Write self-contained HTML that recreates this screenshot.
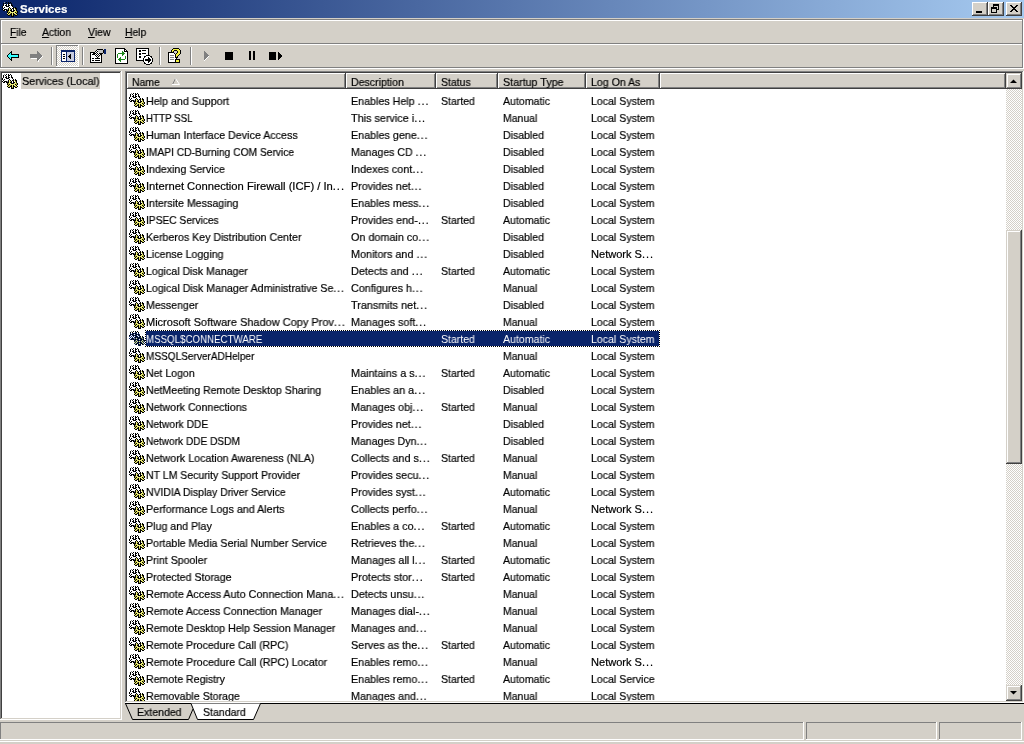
<!DOCTYPE html><html><head><meta charset="utf-8"><style>
*{margin:0;padding:0;box-sizing:border-box}
html,body{width:1024px;height:744px;overflow:hidden;background:#d4d0c8}
body{position:relative;font-family:"Liberation Sans",sans-serif;font-size:11px;color:#000}
.a{position:absolute}
.t{position:absolute;white-space:nowrap;line-height:13px;font-size:11px;will-change:transform;-webkit-text-stroke:0.2px currentColor}
.g{position:absolute}
.hl{position:absolute;height:1px}
.vl{position:absolute;width:1px}
.chk{background-color:#fff;background-image:linear-gradient(45deg,#d4d0c8 25%,transparent 25%,transparent 75%,#d4d0c8 75%),linear-gradient(45deg,#d4d0c8 25%,transparent 25%,transparent 75%,#d4d0c8 75%);background-size:2px 2px;background-position:0 0,1px 1px}
</style></head><body>

<style>.gr{position:absolute;left:-1px;top:-1px;width:1px;height:1px;box-shadow:3px 2px #909090,5px 2px #000,7px 2px #000,9px 2px #000,2px 3px #000,4px 3px #000,7px 3px #000,8px 3px #000,10px 3px #000,2px 4px #000,3px 4px #fff,4px 4px #fff,5px 4px #000,6px 4px #fff,7px 4px #000,8px 4px #fff,9px 4px #fff,10px 4px #000,2px 5px #000,3px 5px #fff,4px 5px #000,5px 5px #000,6px 5px #fff,7px 5px #000,8px 5px #000,9px 5px #fff,10px 5px #000,11px 5px #000,1px 6px #000,2px 6px #fff,3px 6px #fff,4px 6px #fff,5px 6px #000,6px 6px #000,7px 6px #000,8px 6px #fff,9px 6px #fff,10px 6px #fff,11px 6px #000,1px 7px #000,2px 7px #fff,3px 7px #000,4px 7px #fff,5px 7px #fff,6px 7px #fff,7px 7px #fff,8px 7px #000,9px 7px #fff,10px 7px #fff,11px 7px #fff,12px 7px #000,14px 7px #000,2px 8px #000,3px 8px #fff,4px 8px #fff,5px 8px #fff,6px 8px #fff,7px 8px #000,8px 8px #ecec78,9px 8px #000,10px 8px #fff,11px 8px #000,12px 8px #000,13px 8px #ecec78,14px 8px #000,15px 8px #000,1px 9px #000,2px 9px #fff,3px 9px #000,4px 9px #000,5px 9px #000,6px 9px #909090,7px 9px #000,8px 9px #ecec78,9px 9px #a8a838,10px 9px #000,11px 9px #fff,12px 9px #000,13px 9px #fff,14px 9px #a8a838,15px 9px #000,2px 10px #000,3px 10px #000,4px 10px #fff,5px 10px #000,6px 10px #000,7px 10px #000,8px 10px #ecec78,9px 10px #000,10px 10px #000,11px 10px #fff,12px 10px #000,13px 10px #000,14px 10px #ecec78,15px 10px #000,6px 11px #000,7px 11px #a8a838,8px 11px #ecec78,9px 11px #ecec78,10px 11px #000,11px 11px #000,12px 11px #000,13px 11px #ecec78,14px 11px #ecec78,15px 11px #a8a838,16px 11px #000,6px 12px #000,7px 12px #a8a838,8px 12px #000,9px 12px #ecec78,10px 12px #ecec78,11px 12px #ecec78,12px 12px #ecec78,13px 12px #ecec78,14px 12px #000,15px 12px #a8a838,16px 12px #000,6px 13px #ecec78,7px 13px #000,8px 13px #ecec78,9px 13px #a8a838,10px 13px #000,11px 13px #ecec78,12px 13px #000,13px 13px #ecec78,14px 13px #ecec78,15px 13px #000,6px 14px #000,7px 14px #ecec78,8px 14px #a8a838,9px 14px #000,10px 14px #000,11px 14px #ecec78,12px 14px #000,13px 14px #000,14px 14px #a8a838,15px 14px #ecec78,16px 14px #000,7px 15px #000,8px 15px #000,10px 15px #000,11px 15px #a8a838,12px 15px #000,14px 15px #000,15px 15px #000,10px 16px #000,11px 16px #000,12px 16px #000}</style>
<div class="a" style="left:0;top:0;width:1024px;height:18px;background:linear-gradient(to right,#0a246a,#a6caf0)"></div>
<div class="a" style="left:2px;top:1px"><div class="gr"></div></div>
<div class="t" style="left:20px;top:3px;color:#fff;font-weight:bold;transform:scaleX(1.045);transform-origin:0 0">Services</div>
<div class="a" style="left:972px;top:2px;width:16px;height:14px;background:#d4d0c8"></div><div class="a" style="left:972px;top:2px;width:16px;height:1px;background:#fff"></div><div class="a" style="left:972px;top:2px;width:1px;height:14px;background:#fff"></div><div class="a" style="left:973px;top:14px;width:14px;height:1px;background:#808080"></div><div class="a" style="left:986px;top:3px;width:1px;height:12px;background:#808080"></div><div class="a" style="left:972px;top:15px;width:16px;height:1px;background:#404040"></div><div class="a" style="left:987px;top:2px;width:1px;height:14px;background:#404040"></div>
<div class="a" style="left:976px;top:11px;width:6px;height:2px;background:#000"></div>
<div class="a" style="left:988px;top:2px;width:16px;height:14px;background:#d4d0c8"></div><div class="a" style="left:988px;top:2px;width:16px;height:1px;background:#fff"></div><div class="a" style="left:988px;top:2px;width:1px;height:14px;background:#fff"></div><div class="a" style="left:989px;top:14px;width:14px;height:1px;background:#808080"></div><div class="a" style="left:1002px;top:3px;width:1px;height:12px;background:#808080"></div><div class="a" style="left:988px;top:15px;width:16px;height:1px;background:#404040"></div><div class="a" style="left:1003px;top:2px;width:1px;height:14px;background:#404040"></div>
<svg class="a" style="left:991px;top:4px;" width="8" height="9" shape-rendering="crispEdges"><rect x="2" y="0" width="6" height="1" fill="#000"/><rect x="2" y="1" width="6" height="1" fill="#000"/><rect x="2" y="2" width="1" height="1" fill="#000"/><rect x="7" y="2" width="1" height="1" fill="#000"/><rect x="0" y="3" width="6" height="1" fill="#000"/><rect x="7" y="3" width="1" height="1" fill="#000"/><rect x="0" y="4" width="6" height="1" fill="#000"/><rect x="7" y="4" width="1" height="1" fill="#000"/><rect x="0" y="5" width="1" height="1" fill="#000"/><rect x="5" y="5" width="3" height="1" fill="#000"/><rect x="0" y="6" width="1" height="1" fill="#000"/><rect x="5" y="6" width="1" height="1" fill="#000"/><rect x="0" y="7" width="1" height="1" fill="#000"/><rect x="5" y="7" width="1" height="1" fill="#000"/><rect x="0" y="8" width="6" height="1" fill="#000"/></svg>
<div class="a" style="left:1006px;top:2px;width:16px;height:14px;background:#d4d0c8"></div><div class="a" style="left:1006px;top:2px;width:16px;height:1px;background:#fff"></div><div class="a" style="left:1006px;top:2px;width:1px;height:14px;background:#fff"></div><div class="a" style="left:1007px;top:14px;width:14px;height:1px;background:#808080"></div><div class="a" style="left:1020px;top:3px;width:1px;height:12px;background:#808080"></div><div class="a" style="left:1006px;top:15px;width:16px;height:1px;background:#404040"></div><div class="a" style="left:1021px;top:2px;width:1px;height:14px;background:#404040"></div>
<svg class="a" style="left:1010px;top:5px;" width="8" height="7" shape-rendering="crispEdges"><rect x="0" y="0" width="2" height="1" fill="#000"/><rect x="6" y="0" width="2" height="1" fill="#000"/><rect x="1" y="1" width="2" height="1" fill="#000"/><rect x="5" y="1" width="2" height="1" fill="#000"/><rect x="2" y="2" width="4" height="1" fill="#000"/><rect x="3" y="3" width="2" height="1" fill="#000"/><rect x="2" y="4" width="4" height="1" fill="#000"/><rect x="1" y="5" width="2" height="1" fill="#000"/><rect x="5" y="5" width="2" height="1" fill="#000"/><rect x="0" y="6" width="2" height="1" fill="#000"/><rect x="6" y="6" width="2" height="1" fill="#000"/></svg>
<div class="a" style="left:0px;top:18px;width:1024px;height:1px;background:#d4d0c8"></div>
<div class="a" style="left:0px;top:19px;width:1023px;height:1px;background:#808080"></div>
<div class="a" style="left:1px;top:20px;width:1021px;height:1px;background:#fff"></div>
<div class="a" style="left:0px;top:19px;width:1px;height:49px;background:#808080"></div>
<div class="a" style="left:1px;top:20px;width:1px;height:48px;background:#fff"></div>
<div class="a" style="left:1022px;top:19px;width:1px;height:49px;background:#808080"></div>
<div class="a" style="left:1023px;top:19px;width:1px;height:50px;background:#fff"></div>
<div class="a" style="left:1px;top:43px;width:1021px;height:1px;background:#808080"></div>
<div class="a" style="left:1px;top:44px;width:1021px;height:1px;background:#fff"></div>
<div class="a" style="left:0px;top:67px;width:1023px;height:1px;background:#808080"></div>
<div class="a" style="left:0px;top:68px;width:1024px;height:1px;background:#fff"></div>
<div class="t" style="left:10px;top:26px;transform:scaleX(0.9363);transform-origin:0 0;"><span style="text-decoration:underline">F</span>ile</div>
<div class="t" style="left:42px;top:26px;transform:scaleX(0.9508);transform-origin:0 0;"><span style="text-decoration:underline">A</span>ction</div>
<div class="t" style="left:88px;top:26px;transform:scaleX(0.9512);transform-origin:0 0;"><span style="text-decoration:underline">V</span>iew</div>
<div class="t" style="left:125px;top:26px;transform:scaleX(0.9390);transform-origin:0 0;"><span style="text-decoration:underline">H</span>elp</div>
<svg class="a" style="left:7px;top:51px;" width="12" height="10" shape-rendering="crispEdges"><rect x="4" y="0" width="1" height="1" fill="#000"/><rect x="3" y="1" width="2" height="1" fill="#000"/><rect x="2" y="2" width="1" height="1" fill="#000"/><rect x="3" y="2" width="1" height="1" fill="#33ffff"/><rect x="4" y="2" width="1" height="1" fill="#000"/><rect x="1" y="3" width="1" height="1" fill="#000"/><rect x="2" y="3" width="2" height="1" fill="#33ffff"/><rect x="4" y="3" width="8" height="1" fill="#000"/><rect x="0" y="4" width="1" height="1" fill="#000"/><rect x="1" y="4" width="10" height="1" fill="#33ffff"/><rect x="11" y="4" width="1" height="1" fill="#000"/><rect x="0" y="5" width="1" height="1" fill="#000"/><rect x="1" y="5" width="10" height="1" fill="#33ffff"/><rect x="11" y="5" width="1" height="1" fill="#000"/><rect x="1" y="6" width="1" height="1" fill="#000"/><rect x="2" y="6" width="2" height="1" fill="#33ffff"/><rect x="4" y="6" width="8" height="1" fill="#000"/><rect x="2" y="7" width="1" height="1" fill="#000"/><rect x="3" y="7" width="1" height="1" fill="#33ffff"/><rect x="4" y="7" width="1" height="1" fill="#000"/><rect x="3" y="8" width="2" height="1" fill="#000"/><rect x="4" y="9" width="1" height="1" fill="#000"/></svg><svg class="a" style="left:30px;top:51px;" width="13" height="11" shape-rendering="crispEdges"><rect x="7" y="0" width="1" height="1" fill="#808080"/><rect x="7" y="1" width="2" height="1" fill="#808080"/><rect x="7" y="2" width="3" height="1" fill="#808080"/><rect x="0" y="3" width="11" height="1" fill="#808080"/><rect x="0" y="4" width="12" height="1" fill="#808080"/><rect x="0" y="5" width="12" height="1" fill="#808080"/><rect x="12" y="5" width="1" height="1" fill="#fff"/><rect x="0" y="6" width="11" height="1" fill="#808080"/><rect x="11" y="6" width="1" height="1" fill="#fff"/><rect x="1" y="7" width="6" height="1" fill="#fff"/><rect x="7" y="7" width="3" height="1" fill="#808080"/><rect x="10" y="7" width="1" height="1" fill="#fff"/><rect x="7" y="8" width="2" height="1" fill="#808080"/><rect x="9" y="8" width="1" height="1" fill="#fff"/><rect x="7" y="9" width="1" height="1" fill="#808080"/><rect x="8" y="9" width="1" height="1" fill="#fff"/><rect x="8" y="10" width="1" height="1" fill="#fff"/></svg><div class="a" style="left:51px;top:47px;width:1px;height:18px;background:#808080"></div><div class="a" style="left:52px;top:47px;width:1px;height:18px;background:#fff"></div><div class="a chk" style="left:57px;top:46px;width:21px;height:20px"></div><div class="a" style="left:56px;top:45px;width:22px;height:1px;background:#808080"></div><div class="a" style="left:56px;top:45px;width:1px;height:21px;background:#808080"></div><div class="a" style="left:56px;top:66px;width:23px;height:1px;background:#fff"></div><div class="a" style="left:78px;top:45px;width:1px;height:22px;background:#fff"></div><svg class="a" style="left:61px;top:50px;" width="14" height="12" shape-rendering="crispEdges"><rect x="0" y="0" width="14" height="1" fill="#0a246a"/><rect x="0" y="1" width="14" height="1" fill="#0a246a"/><rect x="0" y="2" width="1" height="1" fill="#0a246a"/><rect x="1" y="2" width="4" height="1" fill="#fff"/><rect x="5" y="2" width="1" height="1" fill="#0a246a"/><rect x="6" y="2" width="7" height="1" fill="#c8cce0"/><rect x="13" y="2" width="1" height="1" fill="#0a246a"/><rect x="0" y="3" width="1" height="1" fill="#0a246a"/><rect x="1" y="3" width="4" height="1" fill="#fff"/><rect x="5" y="3" width="1" height="1" fill="#0a246a"/><rect x="6" y="3" width="7" height="1" fill="#c8cce0"/><rect x="13" y="3" width="1" height="1" fill="#0a246a"/><rect x="0" y="4" width="1" height="1" fill="#0a246a"/><rect x="1" y="4" width="1" height="1" fill="#fff"/><rect x="2" y="4" width="2" height="1" fill="#000"/><rect x="4" y="4" width="1" height="1" fill="#fff"/><rect x="5" y="4" width="1" height="1" fill="#0a246a"/><rect x="6" y="4" width="3" height="1" fill="#c8cce0"/><rect x="9" y="4" width="1" height="1" fill="#000"/><rect x="10" y="4" width="3" height="1" fill="#c8cce0"/><rect x="13" y="4" width="1" height="1" fill="#0a246a"/><rect x="0" y="5" width="1" height="1" fill="#0a246a"/><rect x="1" y="5" width="4" height="1" fill="#fff"/><rect x="5" y="5" width="1" height="1" fill="#0a246a"/><rect x="6" y="5" width="2" height="1" fill="#c8cce0"/><rect x="8" y="5" width="2" height="1" fill="#000"/><rect x="10" y="5" width="3" height="1" fill="#c8cce0"/><rect x="13" y="5" width="1" height="1" fill="#0a246a"/><rect x="0" y="6" width="1" height="1" fill="#0a246a"/><rect x="1" y="6" width="1" height="1" fill="#fff"/><rect x="2" y="6" width="2" height="1" fill="#000"/><rect x="4" y="6" width="1" height="1" fill="#fff"/><rect x="5" y="6" width="1" height="1" fill="#0a246a"/><rect x="6" y="6" width="1" height="1" fill="#c8cce0"/><rect x="7" y="6" width="3" height="1" fill="#000"/><rect x="10" y="6" width="3" height="1" fill="#c8cce0"/><rect x="13" y="6" width="1" height="1" fill="#0a246a"/><rect x="0" y="7" width="1" height="1" fill="#0a246a"/><rect x="1" y="7" width="4" height="1" fill="#fff"/><rect x="5" y="7" width="1" height="1" fill="#0a246a"/><rect x="6" y="7" width="2" height="1" fill="#c8cce0"/><rect x="8" y="7" width="2" height="1" fill="#000"/><rect x="10" y="7" width="3" height="1" fill="#c8cce0"/><rect x="13" y="7" width="1" height="1" fill="#0a246a"/><rect x="0" y="8" width="1" height="1" fill="#0a246a"/><rect x="1" y="8" width="1" height="1" fill="#fff"/><rect x="2" y="8" width="2" height="1" fill="#000"/><rect x="4" y="8" width="1" height="1" fill="#fff"/><rect x="5" y="8" width="1" height="1" fill="#0a246a"/><rect x="6" y="8" width="3" height="1" fill="#c8cce0"/><rect x="9" y="8" width="1" height="1" fill="#000"/><rect x="10" y="8" width="3" height="1" fill="#c8cce0"/><rect x="13" y="8" width="1" height="1" fill="#0a246a"/><rect x="0" y="9" width="1" height="1" fill="#0a246a"/><rect x="1" y="9" width="4" height="1" fill="#fff"/><rect x="5" y="9" width="1" height="1" fill="#0a246a"/><rect x="6" y="9" width="7" height="1" fill="#c8cce0"/><rect x="13" y="9" width="1" height="1" fill="#0a246a"/><rect x="0" y="10" width="1" height="1" fill="#0a246a"/><rect x="1" y="10" width="4" height="1" fill="#fff"/><rect x="5" y="10" width="1" height="1" fill="#0a246a"/><rect x="6" y="10" width="7" height="1" fill="#c8cce0"/><rect x="13" y="10" width="1" height="1" fill="#0a246a"/><rect x="0" y="11" width="14" height="1" fill="#0a246a"/></svg><div class="a" style="left:82px;top:47px;width:1px;height:18px;background:#808080"></div><div class="a" style="left:83px;top:47px;width:1px;height:18px;background:#fff"></div><svg class="a" style="left:90px;top:48px;" width="16" height="15" shape-rendering="crispEdges"><rect x="7" y="1" width="6" height="1" fill="#000"/><rect x="14" y="1" width="2" height="1" fill="#0a246a"/><rect x="6" y="2" width="1" height="1" fill="#000"/><rect x="7" y="2" width="1" height="1" fill="#fff"/><rect x="8" y="2" width="5" height="1" fill="#c0c0c0"/><rect x="13" y="2" width="1" height="1" fill="#000"/><rect x="14" y="2" width="2" height="1" fill="#0a246a"/><rect x="5" y="3" width="1" height="1" fill="#000"/><rect x="6" y="3" width="1" height="1" fill="#fff"/><rect x="7" y="3" width="1" height="1" fill="#000"/><rect x="8" y="3" width="5" height="1" fill="#c0c0c0"/><rect x="13" y="3" width="1" height="1" fill="#000"/><rect x="14" y="3" width="2" height="1" fill="#0a246a"/><rect x="0" y="4" width="5" height="1" fill="#000"/><rect x="5" y="4" width="1" height="1" fill="#fff"/><rect x="6" y="4" width="1" height="1" fill="#000"/><rect x="7" y="4" width="1" height="1" fill="#fff"/><rect x="9" y="4" width="4" height="1" fill="#c0c0c0"/><rect x="13" y="4" width="1" height="1" fill="#000"/><rect x="14" y="4" width="2" height="1" fill="#0a246a"/><rect x="0" y="5" width="1" height="1" fill="#000"/><rect x="1" y="5" width="2" height="1" fill="#fff"/><rect x="3" y="5" width="3" height="1" fill="#000"/><rect x="6" y="5" width="1" height="1" fill="#fff"/><rect x="7" y="5" width="1" height="1" fill="#000"/><rect x="8" y="5" width="1" height="1" fill="#fff"/><rect x="9" y="5" width="4" height="1" fill="#000"/><rect x="14" y="5" width="2" height="1" fill="#0a246a"/><rect x="0" y="6" width="1" height="1" fill="#000"/><rect x="1" y="6" width="1" height="1" fill="#fff"/><rect x="2" y="6" width="3" height="1" fill="#000"/><rect x="5" y="6" width="1" height="1" fill="#fff"/><rect x="6" y="6" width="1" height="1" fill="#000"/><rect x="7" y="6" width="1" height="1" fill="#fff"/><rect x="8" y="6" width="1" height="1" fill="#000"/><rect x="9" y="6" width="1" height="1" fill="#fff"/><rect x="10" y="6" width="2" height="1" fill="#000"/><rect x="0" y="7" width="1" height="1" fill="#000"/><rect x="1" y="7" width="4" height="1" fill="#fff"/><rect x="5" y="7" width="1" height="1" fill="#000"/><rect x="6" y="7" width="1" height="1" fill="#fff"/><rect x="7" y="7" width="1" height="1" fill="#000"/><rect x="8" y="7" width="1" height="1" fill="#fff"/><rect x="9" y="7" width="1" height="1" fill="#000"/><rect x="11" y="7" width="1" height="1" fill="#000"/><rect x="0" y="8" width="1" height="1" fill="#000"/><rect x="1" y="8" width="5" height="1" fill="#fff"/><rect x="6" y="8" width="1" height="1" fill="#000"/><rect x="7" y="8" width="1" height="1" fill="#fff"/><rect x="8" y="8" width="1" height="1" fill="#000"/><rect x="10" y="8" width="1" height="1" fill="#fff"/><rect x="11" y="8" width="1" height="1" fill="#000"/><rect x="0" y="9" width="1" height="1" fill="#000"/><rect x="1" y="9" width="6" height="1" fill="#fff"/><rect x="7" y="9" width="1" height="1" fill="#000"/><rect x="9" y="9" width="2" height="1" fill="#fff"/><rect x="11" y="9" width="1" height="1" fill="#000"/><rect x="0" y="10" width="1" height="1" fill="#000"/><rect x="1" y="10" width="1" height="1" fill="#fff"/><rect x="2" y="10" width="2" height="1" fill="#000"/><rect x="4" y="10" width="1" height="1" fill="#fff"/><rect x="5" y="10" width="5" height="1" fill="#000"/><rect x="10" y="10" width="1" height="1" fill="#fff"/><rect x="11" y="10" width="1" height="1" fill="#000"/><rect x="0" y="11" width="1" height="1" fill="#000"/><rect x="1" y="11" width="10" height="1" fill="#fff"/><rect x="11" y="11" width="1" height="1" fill="#000"/><rect x="0" y="12" width="1" height="1" fill="#000"/><rect x="1" y="12" width="1" height="1" fill="#fff"/><rect x="2" y="12" width="2" height="1" fill="#000"/><rect x="4" y="12" width="1" height="1" fill="#fff"/><rect x="5" y="12" width="5" height="1" fill="#000"/><rect x="10" y="12" width="1" height="1" fill="#fff"/><rect x="11" y="12" width="1" height="1" fill="#000"/><rect x="0" y="13" width="1" height="1" fill="#000"/><rect x="1" y="13" width="10" height="1" fill="#fff"/><rect x="11" y="13" width="1" height="1" fill="#000"/><rect x="0" y="14" width="12" height="1" fill="#000"/></svg><svg class="a" style="left:115px;top:48px;" width="13" height="16" shape-rendering="crispEdges"><rect x="0" y="0" width="10" height="1" fill="#000"/><rect x="0" y="1" width="1" height="1" fill="#000"/><rect x="1" y="1" width="8" height="1" fill="#fff"/><rect x="9" y="1" width="2" height="1" fill="#000"/><rect x="0" y="2" width="1" height="1" fill="#000"/><rect x="1" y="2" width="8" height="1" fill="#fff"/><rect x="9" y="2" width="1" height="1" fill="#000"/><rect x="10" y="2" width="1" height="1" fill="#fff"/><rect x="11" y="2" width="1" height="1" fill="#000"/><rect x="0" y="3" width="1" height="1" fill="#000"/><rect x="1" y="3" width="6" height="1" fill="#fff"/><rect x="7" y="3" width="1" height="1" fill="#1f8a1f"/><rect x="8" y="3" width="1" height="1" fill="#fff"/><rect x="9" y="3" width="4" height="1" fill="#000"/><rect x="0" y="4" width="1" height="1" fill="#000"/><rect x="1" y="4" width="6" height="1" fill="#fff"/><rect x="7" y="4" width="2" height="1" fill="#1f8a1f"/><rect x="9" y="4" width="3" height="1" fill="#fff"/><rect x="12" y="4" width="1" height="1" fill="#000"/><rect x="0" y="5" width="1" height="1" fill="#000"/><rect x="1" y="5" width="2" height="1" fill="#fff"/><rect x="3" y="5" width="7" height="1" fill="#1f8a1f"/><rect x="10" y="5" width="2" height="1" fill="#fff"/><rect x="12" y="5" width="1" height="1" fill="#000"/><rect x="0" y="6" width="1" height="1" fill="#000"/><rect x="1" y="6" width="1" height="1" fill="#fff"/><rect x="2" y="6" width="1" height="1" fill="#1f8a1f"/><rect x="3" y="6" width="4" height="1" fill="#fff"/><rect x="7" y="6" width="2" height="1" fill="#1f8a1f"/><rect x="9" y="6" width="3" height="1" fill="#fff"/><rect x="12" y="6" width="1" height="1" fill="#000"/><rect x="0" y="7" width="1" height="1" fill="#000"/><rect x="1" y="7" width="1" height="1" fill="#fff"/><rect x="2" y="7" width="1" height="1" fill="#1f8a1f"/><rect x="3" y="7" width="4" height="1" fill="#fff"/><rect x="7" y="7" width="1" height="1" fill="#1f8a1f"/><rect x="8" y="7" width="4" height="1" fill="#fff"/><rect x="12" y="7" width="1" height="1" fill="#000"/><rect x="0" y="8" width="1" height="1" fill="#000"/><rect x="1" y="8" width="1" height="1" fill="#fff"/><rect x="2" y="8" width="1" height="1" fill="#1f8a1f"/><rect x="3" y="8" width="7" height="1" fill="#fff"/><rect x="10" y="8" width="1" height="1" fill="#1f8a1f"/><rect x="11" y="8" width="1" height="1" fill="#fff"/><rect x="12" y="8" width="1" height="1" fill="#000"/><rect x="0" y="9" width="1" height="1" fill="#000"/><rect x="1" y="9" width="1" height="1" fill="#fff"/><rect x="2" y="9" width="1" height="1" fill="#1f8a1f"/><rect x="3" y="9" width="2" height="1" fill="#fff"/><rect x="5" y="9" width="1" height="1" fill="#1f8a1f"/><rect x="6" y="9" width="4" height="1" fill="#fff"/><rect x="10" y="9" width="1" height="1" fill="#1f8a1f"/><rect x="11" y="9" width="1" height="1" fill="#fff"/><rect x="12" y="9" width="1" height="1" fill="#000"/><rect x="0" y="10" width="1" height="1" fill="#000"/><rect x="1" y="10" width="3" height="1" fill="#fff"/><rect x="4" y="10" width="2" height="1" fill="#1f8a1f"/><rect x="6" y="10" width="4" height="1" fill="#fff"/><rect x="10" y="10" width="1" height="1" fill="#1f8a1f"/><rect x="11" y="10" width="1" height="1" fill="#fff"/><rect x="12" y="10" width="1" height="1" fill="#000"/><rect x="0" y="11" width="1" height="1" fill="#000"/><rect x="1" y="11" width="2" height="1" fill="#fff"/><rect x="3" y="11" width="7" height="1" fill="#1f8a1f"/><rect x="10" y="11" width="2" height="1" fill="#fff"/><rect x="12" y="11" width="1" height="1" fill="#000"/><rect x="0" y="12" width="1" height="1" fill="#000"/><rect x="1" y="12" width="3" height="1" fill="#fff"/><rect x="4" y="12" width="2" height="1" fill="#1f8a1f"/><rect x="6" y="12" width="6" height="1" fill="#fff"/><rect x="12" y="12" width="1" height="1" fill="#000"/><rect x="0" y="13" width="1" height="1" fill="#000"/><rect x="1" y="13" width="4" height="1" fill="#fff"/><rect x="5" y="13" width="1" height="1" fill="#1f8a1f"/><rect x="6" y="13" width="6" height="1" fill="#fff"/><rect x="12" y="13" width="1" height="1" fill="#000"/><rect x="0" y="14" width="1" height="1" fill="#000"/><rect x="1" y="14" width="11" height="1" fill="#fff"/><rect x="12" y="14" width="1" height="1" fill="#000"/><rect x="0" y="15" width="13" height="1" fill="#000"/></svg><svg class="a" style="left:136px;top:48px;" width="17" height="17" shape-rendering="crispEdges"><rect x="0" y="0" width="13" height="1" fill="#000"/><rect x="0" y="1" width="1" height="1" fill="#000"/><rect x="1" y="1" width="11" height="1" fill="#fff"/><rect x="12" y="1" width="1" height="1" fill="#000"/><rect x="0" y="2" width="1" height="1" fill="#000"/><rect x="1" y="2" width="2" height="1" fill="#fff"/><rect x="3" y="2" width="2" height="1" fill="#000"/><rect x="5" y="2" width="1" height="1" fill="#fff"/><rect x="6" y="2" width="4" height="1" fill="#000"/><rect x="10" y="2" width="2" height="1" fill="#fff"/><rect x="12" y="2" width="1" height="1" fill="#000"/><rect x="0" y="3" width="1" height="1" fill="#000"/><rect x="1" y="3" width="2" height="1" fill="#fff"/><rect x="3" y="3" width="2" height="1" fill="#000"/><rect x="5" y="3" width="7" height="1" fill="#fff"/><rect x="12" y="3" width="1" height="1" fill="#000"/><rect x="0" y="4" width="1" height="1" fill="#000"/><rect x="1" y="4" width="11" height="1" fill="#fff"/><rect x="12" y="4" width="1" height="1" fill="#000"/><rect x="0" y="5" width="1" height="1" fill="#000"/><rect x="1" y="5" width="2" height="1" fill="#fff"/><rect x="3" y="5" width="2" height="1" fill="#000"/><rect x="5" y="5" width="1" height="1" fill="#fff"/><rect x="6" y="5" width="4" height="1" fill="#000"/><rect x="10" y="5" width="2" height="1" fill="#fff"/><rect x="12" y="5" width="1" height="1" fill="#000"/><rect x="0" y="6" width="1" height="1" fill="#000"/><rect x="1" y="6" width="2" height="1" fill="#fff"/><rect x="3" y="6" width="2" height="1" fill="#000"/><rect x="5" y="6" width="7" height="1" fill="#fff"/><rect x="12" y="6" width="1" height="1" fill="#000"/><rect x="0" y="7" width="1" height="1" fill="#000"/><rect x="1" y="7" width="9" height="1" fill="#fff"/><rect x="10" y="7" width="4" height="1" fill="#000"/><rect x="0" y="8" width="1" height="1" fill="#000"/><rect x="1" y="8" width="2" height="1" fill="#fff"/><rect x="3" y="8" width="2" height="1" fill="#000"/><rect x="5" y="8" width="3" height="1" fill="#fff"/><rect x="8" y="8" width="2" height="1" fill="#000"/><rect x="10" y="8" width="4" height="1" fill="#fff"/><rect x="14" y="8" width="2" height="1" fill="#000"/><rect x="0" y="9" width="1" height="1" fill="#000"/><rect x="1" y="9" width="2" height="1" fill="#fff"/><rect x="3" y="9" width="2" height="1" fill="#000"/><rect x="5" y="9" width="3" height="1" fill="#fff"/><rect x="8" y="9" width="1" height="1" fill="#000"/><rect x="9" y="9" width="3" height="1" fill="#fff"/><rect x="12" y="9" width="1" height="1" fill="#000"/><rect x="13" y="9" width="2" height="1" fill="#fff"/><rect x="15" y="9" width="1" height="1" fill="#000"/><rect x="0" y="10" width="1" height="1" fill="#000"/><rect x="1" y="10" width="6" height="1" fill="#fff"/><rect x="7" y="10" width="1" height="1" fill="#000"/><rect x="8" y="10" width="4" height="1" fill="#fff"/><rect x="12" y="10" width="2" height="1" fill="#000"/><rect x="14" y="10" width="2" height="1" fill="#fff"/><rect x="16" y="10" width="1" height="1" fill="#000"/><rect x="0" y="11" width="1" height="1" fill="#000"/><rect x="1" y="11" width="6" height="1" fill="#fff"/><rect x="7" y="11" width="1" height="1" fill="#000"/><rect x="8" y="11" width="1" height="1" fill="#fff"/><rect x="9" y="11" width="6" height="1" fill="#000"/><rect x="15" y="11" width="1" height="1" fill="#fff"/><rect x="16" y="11" width="1" height="1" fill="#000"/><rect x="0" y="12" width="8" height="1" fill="#000"/><rect x="8" y="12" width="1" height="1" fill="#fff"/><rect x="9" y="12" width="6" height="1" fill="#000"/><rect x="15" y="12" width="1" height="1" fill="#fff"/><rect x="16" y="12" width="1" height="1" fill="#000"/><rect x="7" y="13" width="1" height="1" fill="#000"/><rect x="8" y="13" width="4" height="1" fill="#fff"/><rect x="12" y="13" width="2" height="1" fill="#000"/><rect x="14" y="13" width="2" height="1" fill="#fff"/><rect x="16" y="13" width="1" height="1" fill="#000"/><rect x="8" y="14" width="1" height="1" fill="#000"/><rect x="9" y="14" width="3" height="1" fill="#fff"/><rect x="12" y="14" width="1" height="1" fill="#000"/><rect x="13" y="14" width="2" height="1" fill="#fff"/><rect x="15" y="14" width="1" height="1" fill="#000"/><rect x="8" y="15" width="2" height="1" fill="#000"/><rect x="10" y="15" width="4" height="1" fill="#fff"/><rect x="14" y="15" width="2" height="1" fill="#000"/><rect x="10" y="16" width="4" height="1" fill="#000"/></svg><div class="a" style="left:159px;top:47px;width:1px;height:18px;background:#808080"></div><div class="a" style="left:160px;top:47px;width:1px;height:18px;background:#fff"></div><svg class="a" style="left:168px;top:48px;" width="14" height="15" shape-rendering="crispEdges"><rect x="5" y="0" width="6" height="1" fill="#000"/><rect x="4" y="1" width="1" height="1" fill="#000"/><rect x="5" y="1" width="6" height="1" fill="#f0f040"/><rect x="11" y="1" width="1" height="1" fill="#000"/><rect x="3" y="2" width="1" height="1" fill="#000"/><rect x="4" y="2" width="2" height="1" fill="#f0f040"/><rect x="6" y="2" width="3" height="1" fill="#000"/><rect x="9" y="2" width="3" height="1" fill="#f0f040"/><rect x="12" y="2" width="1" height="1" fill="#000"/><rect x="3" y="3" width="1" height="1" fill="#000"/><rect x="4" y="3" width="1" height="1" fill="#f0f040"/><rect x="5" y="3" width="1" height="1" fill="#000"/><rect x="9" y="3" width="1" height="1" fill="#000"/><rect x="10" y="3" width="2" height="1" fill="#f0f040"/><rect x="12" y="3" width="1" height="1" fill="#000"/><rect x="0" y="4" width="6" height="1" fill="#000"/><rect x="9" y="4" width="1" height="1" fill="#000"/><rect x="10" y="4" width="2" height="1" fill="#f0f040"/><rect x="12" y="4" width="1" height="1" fill="#000"/><rect x="0" y="5" width="1" height="1" fill="#000"/><rect x="1" y="5" width="5" height="1" fill="#fff"/><rect x="6" y="5" width="1" height="1" fill="#000"/><rect x="8" y="5" width="1" height="1" fill="#000"/><rect x="9" y="5" width="3" height="1" fill="#f0f040"/><rect x="12" y="5" width="1" height="1" fill="#000"/><rect x="0" y="6" width="1" height="1" fill="#000"/><rect x="1" y="6" width="6" height="1" fill="#fff"/><rect x="7" y="6" width="1" height="1" fill="#000"/><rect x="8" y="6" width="3" height="1" fill="#f0f040"/><rect x="11" y="6" width="1" height="1" fill="#000"/><rect x="0" y="7" width="1" height="1" fill="#000"/><rect x="1" y="7" width="1" height="1" fill="#fff"/><rect x="2" y="7" width="4" height="1" fill="#808080"/><rect x="6" y="7" width="1" height="1" fill="#fff"/><rect x="7" y="7" width="1" height="1" fill="#000"/><rect x="8" y="7" width="2" height="1" fill="#f0f040"/><rect x="10" y="7" width="1" height="1" fill="#000"/><rect x="0" y="8" width="1" height="1" fill="#000"/><rect x="1" y="8" width="6" height="1" fill="#fff"/><rect x="7" y="8" width="1" height="1" fill="#000"/><rect x="8" y="8" width="1" height="1" fill="#f0f040"/><rect x="9" y="8" width="1" height="1" fill="#000"/><rect x="0" y="9" width="1" height="1" fill="#000"/><rect x="1" y="9" width="1" height="1" fill="#fff"/><rect x="2" y="9" width="4" height="1" fill="#808080"/><rect x="6" y="9" width="1" height="1" fill="#fff"/><rect x="7" y="9" width="3" height="1" fill="#000"/><rect x="0" y="10" width="1" height="1" fill="#000"/><rect x="1" y="10" width="7" height="1" fill="#fff"/><rect x="8" y="10" width="1" height="1" fill="#000"/><rect x="0" y="11" width="1" height="1" fill="#000"/><rect x="1" y="11" width="1" height="1" fill="#fff"/><rect x="2" y="11" width="4" height="1" fill="#808080"/><rect x="6" y="11" width="1" height="1" fill="#fff"/><rect x="7" y="11" width="5" height="1" fill="#000"/><rect x="0" y="12" width="1" height="1" fill="#000"/><rect x="1" y="12" width="6" height="1" fill="#fff"/><rect x="7" y="12" width="1" height="1" fill="#000"/><rect x="8" y="12" width="3" height="1" fill="#f0f040"/><rect x="11" y="12" width="1" height="1" fill="#000"/><rect x="0" y="13" width="1" height="1" fill="#000"/><rect x="1" y="13" width="6" height="1" fill="#fff"/><rect x="7" y="13" width="1" height="1" fill="#000"/><rect x="8" y="13" width="3" height="1" fill="#f0f040"/><rect x="11" y="13" width="1" height="1" fill="#000"/><rect x="0" y="14" width="12" height="1" fill="#000"/></svg><div class="a" style="left:190px;top:47px;width:1px;height:18px;background:#808080"></div><div class="a" style="left:191px;top:47px;width:1px;height:18px;background:#fff"></div><svg class="a" style="left:204px;top:51px;" width="6" height="10" shape-rendering="crispEdges"><rect x="0" y="0" width="1" height="1" fill="#808080"/><rect x="0" y="1" width="2" height="1" fill="#808080"/><rect x="0" y="2" width="3" height="1" fill="#808080"/><rect x="0" y="3" width="4" height="1" fill="#808080"/><rect x="0" y="4" width="5" height="1" fill="#808080"/><rect x="0" y="5" width="4" height="1" fill="#808080"/><rect x="4" y="5" width="1" height="1" fill="#fff"/><rect x="0" y="6" width="3" height="1" fill="#808080"/><rect x="3" y="6" width="1" height="1" fill="#fff"/><rect x="0" y="7" width="2" height="1" fill="#808080"/><rect x="2" y="7" width="1" height="1" fill="#fff"/><rect x="0" y="8" width="1" height="1" fill="#808080"/><rect x="1" y="8" width="1" height="1" fill="#fff"/><rect x="0" y="9" width="1" height="1" fill="#fff"/></svg><div class="a" style="left:225px;top:52px;width:8px;height:8px;background:#000"></div><div class="a" style="left:249px;top:51px;width:2px;height:9px;background:#000"></div><div class="a" style="left:253px;top:51px;width:2px;height:9px;background:#000"></div><div class="a" style="left:269px;top:52px;width:7px;height:8px;background:#000"></div><svg class="a" style="left:278px;top:52px;" width="5" height="8" shape-rendering="crispEdges"><rect x="0" y="0" width="1" height="1" fill="#000"/><rect x="0" y="1" width="2" height="1" fill="#000"/><rect x="0" y="2" width="3" height="1" fill="#000"/><rect x="0" y="3" width="4" height="1" fill="#000"/><rect x="0" y="4" width="4" height="1" fill="#000"/><rect x="0" y="5" width="3" height="1" fill="#000"/><rect x="0" y="6" width="2" height="1" fill="#000"/><rect x="0" y="7" width="1" height="1" fill="#000"/></svg>
<div class="a" style="left:0px;top:71px;width:122px;height:649px;background:#fff"></div><div class="a" style="left:0px;top:71px;width:121px;height:1px;background:#808080"></div><div class="a" style="left:0px;top:71px;width:1px;height:648px;background:#808080"></div><div class="a" style="left:0px;top:719px;width:122px;height:1px;background:#fff"></div><div class="a" style="left:121px;top:71px;width:1px;height:649px;background:#fff"></div><div class="a" style="left:1px;top:72px;width:119px;height:1px;background:#404040"></div><div class="a" style="left:1px;top:72px;width:1px;height:646px;background:#404040"></div><div class="a" style="left:1px;top:718px;width:120px;height:1px;background:#d4d0c8"></div><div class="a" style="left:120px;top:72px;width:1px;height:647px;background:#d4d0c8"></div>
<div class="a" style="left:2px;top:73px"><div class="gr"></div></div>
<div class="a" style="left:21px;top:73px;width:79px;height:16px;background:#d4d0c8"></div>
<div class="t" style="left:22px;top:75px;color:#000;transform:scaleX(0.9815);transform-origin:0 0;">Services (Local)</div>
<div class="a" style="left:125px;top:71px;width:899px;height:632px;background:#fff"></div><div class="a" style="left:125px;top:71px;width:898px;height:1px;background:#808080"></div><div class="a" style="left:125px;top:71px;width:1px;height:631px;background:#808080"></div><div class="a" style="left:125px;top:702px;width:899px;height:1px;background:#fff"></div><div class="a" style="left:1023px;top:71px;width:1px;height:632px;background:#fff"></div><div class="a" style="left:126px;top:72px;width:896px;height:1px;background:#404040"></div><div class="a" style="left:126px;top:72px;width:1px;height:629px;background:#404040"></div><div class="a" style="left:126px;top:701px;width:897px;height:1px;background:#d4d0c8"></div><div class="a" style="left:1022px;top:72px;width:1px;height:630px;background:#d4d0c8"></div>
<div class="a" style="left:127px;top:89px;width:879px;height:612px;overflow:hidden">
<div class="a" style="left:2px;top:3px"><div class="gr"></div></div>
<div class="t" style="left:19px;top:6px;color:#000;transform:scaleX(0.9702);transform-origin:0 0;">Help and Support</div>
<div class="t" style="left:224px;top:6px;color:#000;transform:scaleX(0.9734);transform-origin:0 0;">Enables Help <span style="letter-spacing:0.9px">...</span></div>
<div class="t" style="left:314px;top:6px;color:#000;transform:scaleX(0.9547);transform-origin:0 0;">Started</div>
<div class="t" style="left:376px;top:6px;color:#000;transform:scaleX(0.9606);transform-origin:0 0;">Automatic</div>
<div class="t" style="left:464px;top:6px;color:#000;transform:scaleX(0.9628);transform-origin:0 0;">Local System</div>
<div class="a" style="left:2px;top:20px"><div class="gr"></div></div>
<div class="t" style="left:19px;top:23px;color:#000;transform:scaleX(0.8879);transform-origin:0 0;">HTTP SSL</div>
<div class="t" style="left:224px;top:23px;color:#000;transform:scaleX(0.9853);transform-origin:0 0;">This service i<span style="letter-spacing:0.9px">...</span></div>
<div class="t" style="left:376px;top:23px;color:#000;transform:scaleX(0.9496);transform-origin:0 0;">Manual</div>
<div class="t" style="left:464px;top:23px;color:#000;transform:scaleX(0.9628);transform-origin:0 0;">Local System</div>
<div class="a" style="left:2px;top:37px"><div class="gr"></div></div>
<div class="t" style="left:19px;top:40px;color:#000;transform:scaleX(0.9727);transform-origin:0 0;">Human Interface Device Access</div>
<div class="t" style="left:224px;top:40px;color:#000;transform:scaleX(0.9774);transform-origin:0 0;">Enables gene<span style="letter-spacing:0.9px">...</span></div>
<div class="t" style="left:376px;top:40px;color:#000;transform:scaleX(0.9568);transform-origin:0 0;">Disabled</div>
<div class="t" style="left:464px;top:40px;color:#000;transform:scaleX(0.9628);transform-origin:0 0;">Local System</div>
<div class="a" style="left:2px;top:54px"><div class="gr"></div></div>
<div class="t" style="left:19px;top:57px;color:#000;transform:scaleX(0.9321);transform-origin:0 0;">IMAPI CD-Burning COM Service</div>
<div class="t" style="left:224px;top:57px;color:#000;transform:scaleX(0.9597);transform-origin:0 0;">Manages CD <span style="letter-spacing:0.9px">...</span></div>
<div class="t" style="left:376px;top:57px;color:#000;transform:scaleX(0.9568);transform-origin:0 0;">Disabled</div>
<div class="t" style="left:464px;top:57px;color:#000;transform:scaleX(0.9628);transform-origin:0 0;">Local System</div>
<div class="a" style="left:2px;top:71px"><div class="gr"></div></div>
<div class="t" style="left:19px;top:74px;color:#000;transform:scaleX(0.9697);transform-origin:0 0;">Indexing Service</div>
<div class="t" style="left:224px;top:74px;color:#000;transform:scaleX(0.9836);transform-origin:0 0;">Indexes cont<span style="letter-spacing:0.9px">...</span></div>
<div class="t" style="left:376px;top:74px;color:#000;transform:scaleX(0.9568);transform-origin:0 0;">Disabled</div>
<div class="t" style="left:464px;top:74px;color:#000;transform:scaleX(0.9628);transform-origin:0 0;">Local System</div>
<div class="a" style="left:2px;top:88px"><div class="gr"></div></div>
<div class="t" style="left:19px;top:91px;color:#000;transform:scaleX(1.0187);transform-origin:0 0;">Internet Connection Firewall (ICF) / In<span style="letter-spacing:0.9px">...</span></div>
<div class="t" style="left:224px;top:91px;color:#000;transform:scaleX(0.9773);transform-origin:0 0;">Provides net<span style="letter-spacing:0.9px">...</span></div>
<div class="t" style="left:376px;top:91px;color:#000;transform:scaleX(0.9568);transform-origin:0 0;">Disabled</div>
<div class="t" style="left:464px;top:91px;color:#000;transform:scaleX(0.9628);transform-origin:0 0;">Local System</div>
<div class="a" style="left:2px;top:105px"><div class="gr"></div></div>
<div class="t" style="left:19px;top:108px;color:#000;transform:scaleX(0.9687);transform-origin:0 0;">Intersite Messaging</div>
<div class="t" style="left:224px;top:108px;color:#000;transform:scaleX(0.9772);transform-origin:0 0;">Enables mess<span style="letter-spacing:0.9px">...</span></div>
<div class="t" style="left:376px;top:108px;color:#000;transform:scaleX(0.9568);transform-origin:0 0;">Disabled</div>
<div class="t" style="left:464px;top:108px;color:#000;transform:scaleX(0.9628);transform-origin:0 0;">Local System</div>
<div class="a" style="left:2px;top:122px"><div class="gr"></div></div>
<div class="t" style="left:19px;top:125px;color:#000;transform:scaleX(0.9275);transform-origin:0 0;">IPSEC Services</div>
<div class="t" style="left:224px;top:125px;color:#000;transform:scaleX(0.9854);transform-origin:0 0;">Provides end-<span style="letter-spacing:0.9px">...</span></div>
<div class="t" style="left:314px;top:125px;color:#000;transform:scaleX(0.9547);transform-origin:0 0;">Started</div>
<div class="t" style="left:376px;top:125px;color:#000;transform:scaleX(0.9606);transform-origin:0 0;">Automatic</div>
<div class="t" style="left:464px;top:125px;color:#000;transform:scaleX(0.9628);transform-origin:0 0;">Local System</div>
<div class="a" style="left:2px;top:139px"><div class="gr"></div></div>
<div class="t" style="left:19px;top:142px;color:#000;transform:scaleX(0.9665);transform-origin:0 0;">Kerberos Key Distribution Center</div>
<div class="t" style="left:224px;top:142px;color:#000;transform:scaleX(0.9823);transform-origin:0 0;">On domain co<span style="letter-spacing:0.9px">...</span></div>
<div class="t" style="left:376px;top:142px;color:#000;transform:scaleX(0.9568);transform-origin:0 0;">Disabled</div>
<div class="t" style="left:464px;top:142px;color:#000;transform:scaleX(0.9628);transform-origin:0 0;">Local System</div>
<div class="a" style="left:2px;top:156px"><div class="gr"></div></div>
<div class="t" style="left:19px;top:159px;color:#000;transform:scaleX(0.9671);transform-origin:0 0;">License Logging</div>
<div class="t" style="left:224px;top:159px;color:#000;transform:scaleX(0.9816);transform-origin:0 0;">Monitors and <span style="letter-spacing:0.9px">...</span></div>
<div class="t" style="left:376px;top:159px;color:#000;transform:scaleX(0.9568);transform-origin:0 0;">Disabled</div>
<div class="t" style="left:464px;top:159px;color:#000;transform:scaleX(1.0048);transform-origin:0 0;">Network S<span style="letter-spacing:0.9px">...</span></div>
<div class="a" style="left:2px;top:173px"><div class="gr"></div></div>
<div class="t" style="left:19px;top:176px;color:#000;transform:scaleX(0.9633);transform-origin:0 0;">Logical Disk Manager</div>
<div class="t" style="left:224px;top:176px;color:#000;transform:scaleX(0.9836);transform-origin:0 0;">Detects and <span style="letter-spacing:0.9px">...</span></div>
<div class="t" style="left:314px;top:176px;color:#000;transform:scaleX(0.9547);transform-origin:0 0;">Started</div>
<div class="t" style="left:376px;top:176px;color:#000;transform:scaleX(0.9606);transform-origin:0 0;">Automatic</div>
<div class="t" style="left:464px;top:176px;color:#000;transform:scaleX(0.9628);transform-origin:0 0;">Local System</div>
<div class="a" style="left:2px;top:190px"><div class="gr"></div></div>
<div class="t" style="left:19px;top:193px;color:#000;transform:scaleX(0.9667);transform-origin:0 0;">Logical Disk Manager Administrative Se<span style="letter-spacing:0.9px">...</span></div>
<div class="t" style="left:224px;top:193px;color:#000;transform:scaleX(0.9766);transform-origin:0 0;">Configures h<span style="letter-spacing:0.9px">...</span></div>
<div class="t" style="left:376px;top:193px;color:#000;transform:scaleX(0.9496);transform-origin:0 0;">Manual</div>
<div class="t" style="left:464px;top:193px;color:#000;transform:scaleX(0.9628);transform-origin:0 0;">Local System</div>
<div class="a" style="left:2px;top:207px"><div class="gr"></div></div>
<div class="t" style="left:19px;top:210px;color:#000;transform:scaleX(0.9585);transform-origin:0 0;">Messenger</div>
<div class="t" style="left:224px;top:210px;color:#000;transform:scaleX(0.9835);transform-origin:0 0;">Transmits net<span style="letter-spacing:0.9px">...</span></div>
<div class="t" style="left:376px;top:210px;color:#000;transform:scaleX(0.9568);transform-origin:0 0;">Disabled</div>
<div class="t" style="left:464px;top:210px;color:#000;transform:scaleX(0.9628);transform-origin:0 0;">Local System</div>
<div class="a" style="left:2px;top:224px"><div class="gr"></div></div>
<div class="t" style="left:19px;top:227px;color:#000;transform:scaleX(0.9977);transform-origin:0 0;">Microsoft Software Shadow Copy Prov<span style="letter-spacing:0.9px">...</span></div>
<div class="t" style="left:224px;top:227px;color:#000;transform:scaleX(0.9746);transform-origin:0 0;">Manages soft<span style="letter-spacing:0.9px">...</span></div>
<div class="t" style="left:376px;top:227px;color:#000;transform:scaleX(0.9496);transform-origin:0 0;">Manual</div>
<div class="t" style="left:464px;top:227px;color:#000;transform:scaleX(0.9628);transform-origin:0 0;">Local System</div>
<div class="a" style="left:18px;top:241px;width:515px;height:17px;background:#0a246a;background-clip:padding-box;border:1px dotted #000"></div>
<div class="a" style="left:2px;top:241px"><svg class="g" width="16" height="16" shape-rendering="crispEdges"><rect x="2" y="1" width="1" height="1" fill="#909090"/><rect x="4" y="1" width="1" height="1" fill="#000"/><rect x="6" y="1" width="1" height="1" fill="#000"/><rect x="8" y="1" width="1" height="1" fill="#000"/><rect x="1" y="2" width="1" height="1" fill="#000"/><rect x="3" y="2" width="1" height="1" fill="#000"/><rect x="6" y="2" width="1" height="1" fill="#0a246a"/><rect x="7" y="2" width="1" height="1" fill="#000"/><rect x="9" y="2" width="1" height="1" fill="#000"/><rect x="1" y="3" width="1" height="1" fill="#0a246a"/><rect x="2" y="3" width="1" height="1" fill="#fff"/><rect x="3" y="3" width="1" height="1" fill="#0a246a"/><rect x="4" y="3" width="1" height="1" fill="#000"/><rect x="5" y="3" width="1" height="1" fill="#0a246a"/><rect x="6" y="3" width="1" height="1" fill="#000"/><rect x="7" y="3" width="1" height="1" fill="#0a246a"/><rect x="8" y="3" width="1" height="1" fill="#fff"/><rect x="9" y="3" width="1" height="1" fill="#0a246a"/><rect x="1" y="4" width="1" height="1" fill="#000"/><rect x="2" y="4" width="1" height="1" fill="#0a246a"/><rect x="3" y="4" width="1" height="1" fill="#000"/><rect x="4" y="4" width="1" height="1" fill="#0a246a"/><rect x="5" y="4" width="1" height="1" fill="#fff"/><rect x="6" y="4" width="1" height="1" fill="#0a246a"/><rect x="7" y="4" width="1" height="1" fill="#000"/><rect x="8" y="4" width="1" height="1" fill="#0a246a"/><rect x="9" y="4" width="1" height="1" fill="#000"/><rect x="10" y="4" width="1" height="1" fill="#0a246a"/><rect x="0" y="5" width="1" height="1" fill="#000"/><rect x="1" y="5" width="1" height="1" fill="#0a246a"/><rect x="2" y="5" width="1" height="1" fill="#fff"/><rect x="3" y="5" width="1" height="1" fill="#0a246a"/><rect x="4" y="5" width="1" height="1" fill="#000"/><rect x="5" y="5" width="1" height="1" fill="#0a246a"/><rect x="6" y="5" width="1" height="1" fill="#000"/><rect x="7" y="5" width="1" height="1" fill="#0a246a"/><rect x="8" y="5" width="1" height="1" fill="#fff"/><rect x="9" y="5" width="1" height="1" fill="#0a246a"/><rect x="10" y="5" width="1" height="1" fill="#000"/><rect x="0" y="6" width="1" height="1" fill="#0a246a"/><rect x="1" y="6" width="1" height="1" fill="#fff"/><rect x="2" y="6" width="1" height="1" fill="#0a246a"/><rect x="3" y="6" width="1" height="1" fill="#fff"/><rect x="4" y="6" width="1" height="1" fill="#0a246a"/><rect x="5" y="6" width="1" height="1" fill="#fff"/><rect x="6" y="6" width="1" height="1" fill="#0a246a"/><rect x="7" y="6" width="1" height="1" fill="#000"/><rect x="8" y="6" width="1" height="1" fill="#0a246a"/><rect x="9" y="6" width="1" height="1" fill="#fff"/><rect x="10" y="6" width="1" height="1" fill="#0a246a"/><rect x="11" y="6" width="1" height="1" fill="#000"/><rect x="13" y="6" width="1" height="1" fill="#000"/><rect x="1" y="7" width="1" height="1" fill="#0a246a"/><rect x="2" y="7" width="1" height="1" fill="#fff"/><rect x="3" y="7" width="1" height="1" fill="#0a246a"/><rect x="4" y="7" width="1" height="1" fill="#fff"/><rect x="5" y="7" width="1" height="1" fill="#0a246a"/><rect x="6" y="7" width="1" height="1" fill="#000"/><rect x="7" y="7" width="1" height="1" fill="#0a246a"/><rect x="8" y="7" width="1" height="1" fill="#000"/><rect x="9" y="7" width="1" height="1" fill="#0a246a"/><rect x="10" y="7" width="1" height="1" fill="#000"/><rect x="11" y="7" width="1" height="1" fill="#0a246a"/><rect x="12" y="7" width="1" height="1" fill="#ecec78"/><rect x="13" y="7" width="1" height="1" fill="#0a246a"/><rect x="14" y="7" width="1" height="1" fill="#000"/><rect x="0" y="8" width="1" height="1" fill="#0a246a"/><rect x="1" y="8" width="1" height="1" fill="#fff"/><rect x="2" y="8" width="1" height="1" fill="#0a246a"/><rect x="3" y="8" width="1" height="1" fill="#000"/><rect x="4" y="8" width="1" height="1" fill="#0a246a"/><rect x="5" y="8" width="1" height="1" fill="#909090"/><rect x="6" y="8" width="1" height="1" fill="#0a246a"/><rect x="7" y="8" width="1" height="1" fill="#ecec78"/><rect x="8" y="8" width="1" height="1" fill="#0a246a"/><rect x="9" y="8" width="1" height="1" fill="#000"/><rect x="10" y="8" width="1" height="1" fill="#0a246a"/><rect x="11" y="8" width="1" height="1" fill="#000"/><rect x="12" y="8" width="1" height="1" fill="#0a246a"/><rect x="13" y="8" width="1" height="1" fill="#a8a838"/><rect x="14" y="8" width="1" height="1" fill="#0a246a"/><rect x="1" y="9" width="1" height="1" fill="#0a246a"/><rect x="2" y="9" width="1" height="1" fill="#000"/><rect x="3" y="9" width="1" height="1" fill="#0a246a"/><rect x="4" y="9" width="1" height="1" fill="#000"/><rect x="5" y="9" width="1" height="1" fill="#0a246a"/><rect x="6" y="9" width="1" height="1" fill="#000"/><rect x="7" y="9" width="1" height="1" fill="#0a246a"/><rect x="8" y="9" width="1" height="1" fill="#000"/><rect x="9" y="9" width="1" height="1" fill="#0a246a"/><rect x="10" y="9" width="1" height="1" fill="#fff"/><rect x="11" y="9" width="1" height="1" fill="#0a246a"/><rect x="12" y="9" width="1" height="1" fill="#000"/><rect x="13" y="9" width="1" height="1" fill="#0a246a"/><rect x="14" y="9" width="1" height="1" fill="#000"/><rect x="5" y="10" width="1" height="1" fill="#000"/><rect x="6" y="10" width="1" height="1" fill="#0a246a"/><rect x="7" y="10" width="1" height="1" fill="#ecec78"/><rect x="8" y="10" width="1" height="1" fill="#0a246a"/><rect x="9" y="10" width="1" height="1" fill="#000"/><rect x="10" y="10" width="1" height="1" fill="#0a246a"/><rect x="11" y="10" width="1" height="1" fill="#000"/><rect x="12" y="10" width="1" height="1" fill="#0a246a"/><rect x="13" y="10" width="1" height="1" fill="#ecec78"/><rect x="14" y="10" width="1" height="1" fill="#0a246a"/><rect x="15" y="10" width="1" height="1" fill="#000"/><rect x="5" y="11" width="1" height="1" fill="#0a246a"/><rect x="6" y="11" width="1" height="1" fill="#a8a838"/><rect x="7" y="11" width="1" height="1" fill="#0a246a"/><rect x="8" y="11" width="1" height="1" fill="#ecec78"/><rect x="9" y="11" width="1" height="1" fill="#0a246a"/><rect x="10" y="11" width="1" height="1" fill="#ecec78"/><rect x="11" y="11" width="1" height="1" fill="#0a246a"/><rect x="12" y="11" width="1" height="1" fill="#ecec78"/><rect x="13" y="11" width="1" height="1" fill="#0a246a"/><rect x="14" y="11" width="1" height="1" fill="#a8a838"/><rect x="15" y="11" width="1" height="1" fill="#0a246a"/><rect x="5" y="12" width="1" height="1" fill="#ecec78"/><rect x="6" y="12" width="1" height="1" fill="#0a246a"/><rect x="7" y="12" width="1" height="1" fill="#ecec78"/><rect x="8" y="12" width="1" height="1" fill="#0a246a"/><rect x="9" y="12" width="1" height="1" fill="#000"/><rect x="10" y="12" width="1" height="1" fill="#0a246a"/><rect x="11" y="12" width="1" height="1" fill="#000"/><rect x="12" y="12" width="1" height="1" fill="#0a246a"/><rect x="13" y="12" width="1" height="1" fill="#ecec78"/><rect x="14" y="12" width="1" height="1" fill="#0a246a"/><rect x="5" y="13" width="1" height="1" fill="#0a246a"/><rect x="6" y="13" width="1" height="1" fill="#ecec78"/><rect x="7" y="13" width="1" height="1" fill="#0a246a"/><rect x="8" y="13" width="1" height="1" fill="#000"/><rect x="9" y="13" width="1" height="1" fill="#0a246a"/><rect x="10" y="13" width="1" height="1" fill="#ecec78"/><rect x="11" y="13" width="1" height="1" fill="#0a246a"/><rect x="12" y="13" width="1" height="1" fill="#000"/><rect x="13" y="13" width="1" height="1" fill="#0a246a"/><rect x="14" y="13" width="1" height="1" fill="#ecec78"/><rect x="15" y="13" width="1" height="1" fill="#0a246a"/><rect x="6" y="14" width="1" height="1" fill="#0a246a"/><rect x="7" y="14" width="1" height="1" fill="#000"/><rect x="9" y="14" width="1" height="1" fill="#000"/><rect x="10" y="14" width="1" height="1" fill="#0a246a"/><rect x="11" y="14" width="1" height="1" fill="#000"/><rect x="13" y="14" width="1" height="1" fill="#000"/><rect x="14" y="14" width="1" height="1" fill="#0a246a"/><rect x="9" y="15" width="1" height="1" fill="#0a246a"/><rect x="10" y="15" width="1" height="1" fill="#000"/><rect x="11" y="15" width="1" height="1" fill="#0a246a"/></svg></div>
<div class="t" style="left:19px;top:244px;color:#fff;transform:scaleX(0.8838);transform-origin:0 0;-webkit-text-stroke:0;">MSSQL$CONNECTWARE</div>
<div class="t" style="left:314px;top:244px;color:#fff;transform:scaleX(0.9547);transform-origin:0 0;-webkit-text-stroke:0;">Started</div>
<div class="t" style="left:376px;top:244px;color:#fff;transform:scaleX(0.9606);transform-origin:0 0;-webkit-text-stroke:0;">Automatic</div>
<div class="t" style="left:464px;top:244px;color:#fff;transform:scaleX(0.9628);transform-origin:0 0;-webkit-text-stroke:0;">Local System</div>
<div class="a" style="left:2px;top:258px"><div class="gr"></div></div>
<div class="t" style="left:19px;top:261px;color:#000;transform:scaleX(0.9136);transform-origin:0 0;">MSSQLServerADHelper</div>
<div class="t" style="left:376px;top:261px;color:#000;transform:scaleX(0.9496);transform-origin:0 0;">Manual</div>
<div class="t" style="left:464px;top:261px;color:#000;transform:scaleX(0.9628);transform-origin:0 0;">Local System</div>
<div class="a" style="left:2px;top:275px"><div class="gr"></div></div>
<div class="t" style="left:19px;top:278px;color:#000;transform:scaleX(0.9575);transform-origin:0 0;">Net Logon</div>
<div class="t" style="left:224px;top:278px;color:#000;transform:scaleX(0.9818);transform-origin:0 0;">Maintains a s<span style="letter-spacing:0.9px">...</span></div>
<div class="t" style="left:314px;top:278px;color:#000;transform:scaleX(0.9547);transform-origin:0 0;">Started</div>
<div class="t" style="left:376px;top:278px;color:#000;transform:scaleX(0.9606);transform-origin:0 0;">Automatic</div>
<div class="t" style="left:464px;top:278px;color:#000;transform:scaleX(0.9628);transform-origin:0 0;">Local System</div>
<div class="a" style="left:2px;top:292px"><div class="gr"></div></div>
<div class="t" style="left:19px;top:295px;color:#000;transform:scaleX(0.9618);transform-origin:0 0;">NetMeeting Remote Desktop Sharing</div>
<div class="t" style="left:224px;top:295px;color:#000;transform:scaleX(0.9844);transform-origin:0 0;">Enables an a<span style="letter-spacing:0.9px">...</span></div>
<div class="t" style="left:376px;top:295px;color:#000;transform:scaleX(0.9568);transform-origin:0 0;">Disabled</div>
<div class="t" style="left:464px;top:295px;color:#000;transform:scaleX(0.9628);transform-origin:0 0;">Local System</div>
<div class="a" style="left:2px;top:309px"><div class="gr"></div></div>
<div class="t" style="left:19px;top:312px;color:#000;transform:scaleX(0.9655);transform-origin:0 0;">Network Connections</div>
<div class="t" style="left:224px;top:312px;color:#000;transform:scaleX(0.9748);transform-origin:0 0;">Manages obj<span style="letter-spacing:0.9px">...</span></div>
<div class="t" style="left:314px;top:312px;color:#000;transform:scaleX(0.9547);transform-origin:0 0;">Started</div>
<div class="t" style="left:376px;top:312px;color:#000;transform:scaleX(0.9496);transform-origin:0 0;">Manual</div>
<div class="t" style="left:464px;top:312px;color:#000;transform:scaleX(0.9628);transform-origin:0 0;">Local System</div>
<div class="a" style="left:2px;top:326px"><div class="gr"></div></div>
<div class="t" style="left:19px;top:329px;color:#000;transform:scaleX(0.9341);transform-origin:0 0;">Network DDE</div>
<div class="t" style="left:224px;top:329px;color:#000;transform:scaleX(0.9773);transform-origin:0 0;">Provides net<span style="letter-spacing:0.9px">...</span></div>
<div class="t" style="left:376px;top:329px;color:#000;transform:scaleX(0.9568);transform-origin:0 0;">Disabled</div>
<div class="t" style="left:464px;top:329px;color:#000;transform:scaleX(0.9628);transform-origin:0 0;">Local System</div>
<div class="a" style="left:2px;top:343px"><div class="gr"></div></div>
<div class="t" style="left:19px;top:346px;color:#000;transform:scaleX(0.9195);transform-origin:0 0;">Network DDE DSDM</div>
<div class="t" style="left:224px;top:346px;color:#000;transform:scaleX(0.9638);transform-origin:0 0;">Manages Dyn<span style="letter-spacing:0.9px">...</span></div>
<div class="t" style="left:376px;top:346px;color:#000;transform:scaleX(0.9568);transform-origin:0 0;">Disabled</div>
<div class="t" style="left:464px;top:346px;color:#000;transform:scaleX(0.9628);transform-origin:0 0;">Local System</div>
<div class="a" style="left:2px;top:360px"><div class="gr"></div></div>
<div class="t" style="left:19px;top:363px;color:#000;transform:scaleX(0.9714);transform-origin:0 0;">Network Location Awareness (NLA)</div>
<div class="t" style="left:224px;top:363px;color:#000;transform:scaleX(0.9831);transform-origin:0 0;">Collects and s<span style="letter-spacing:0.9px">...</span></div>
<div class="t" style="left:314px;top:363px;color:#000;transform:scaleX(0.9547);transform-origin:0 0;">Started</div>
<div class="t" style="left:376px;top:363px;color:#000;transform:scaleX(0.9496);transform-origin:0 0;">Manual</div>
<div class="t" style="left:464px;top:363px;color:#000;transform:scaleX(0.9628);transform-origin:0 0;">Local System</div>
<div class="a" style="left:2px;top:377px"><div class="gr"></div></div>
<div class="t" style="left:19px;top:380px;color:#000;transform:scaleX(0.9565);transform-origin:0 0;">NT LM Security Support Provider</div>
<div class="t" style="left:224px;top:380px;color:#000;transform:scaleX(0.9772);transform-origin:0 0;">Provides secu<span style="letter-spacing:0.9px">...</span></div>
<div class="t" style="left:376px;top:380px;color:#000;transform:scaleX(0.9496);transform-origin:0 0;">Manual</div>
<div class="t" style="left:464px;top:380px;color:#000;transform:scaleX(0.9628);transform-origin:0 0;">Local System</div>
<div class="a" style="left:2px;top:394px"><div class="gr"></div></div>
<div class="t" style="left:19px;top:397px;color:#000;transform:scaleX(0.9477);transform-origin:0 0;">NVIDIA Display Driver Service</div>
<div class="t" style="left:224px;top:397px;color:#000;transform:scaleX(0.9772);transform-origin:0 0;">Provides syst<span style="letter-spacing:0.9px">...</span></div>
<div class="t" style="left:376px;top:397px;color:#000;transform:scaleX(0.9606);transform-origin:0 0;">Automatic</div>
<div class="t" style="left:464px;top:397px;color:#000;transform:scaleX(0.9628);transform-origin:0 0;">Local System</div>
<div class="a" style="left:2px;top:411px"><div class="gr"></div></div>
<div class="t" style="left:19px;top:414px;color:#000;transform:scaleX(0.9767);transform-origin:0 0;">Performance Logs and Alerts</div>
<div class="t" style="left:224px;top:414px;color:#000;transform:scaleX(0.9767);transform-origin:0 0;">Collects perfo<span style="letter-spacing:0.9px">...</span></div>
<div class="t" style="left:376px;top:414px;color:#000;transform:scaleX(0.9496);transform-origin:0 0;">Manual</div>
<div class="t" style="left:464px;top:414px;color:#000;transform:scaleX(1.0048);transform-origin:0 0;">Network S<span style="letter-spacing:0.9px">...</span></div>
<div class="a" style="left:2px;top:428px"><div class="gr"></div></div>
<div class="t" style="left:19px;top:431px;color:#000;transform:scaleX(0.9692);transform-origin:0 0;">Plug and Play</div>
<div class="t" style="left:224px;top:431px;color:#000;transform:scaleX(0.9843);transform-origin:0 0;">Enables a co<span style="letter-spacing:0.9px">...</span></div>
<div class="t" style="left:314px;top:431px;color:#000;transform:scaleX(0.9547);transform-origin:0 0;">Started</div>
<div class="t" style="left:376px;top:431px;color:#000;transform:scaleX(0.9606);transform-origin:0 0;">Automatic</div>
<div class="t" style="left:464px;top:431px;color:#000;transform:scaleX(0.9628);transform-origin:0 0;">Local System</div>
<div class="a" style="left:2px;top:445px"><div class="gr"></div></div>
<div class="t" style="left:19px;top:448px;color:#000;transform:scaleX(0.9659);transform-origin:0 0;">Portable Media Serial Number Service</div>
<div class="t" style="left:224px;top:448px;color:#000;transform:scaleX(0.9766);transform-origin:0 0;">Retrieves the<span style="letter-spacing:0.9px">...</span></div>
<div class="t" style="left:376px;top:448px;color:#000;transform:scaleX(0.9496);transform-origin:0 0;">Manual</div>
<div class="t" style="left:464px;top:448px;color:#000;transform:scaleX(0.9628);transform-origin:0 0;">Local System</div>
<div class="a" style="left:2px;top:462px"><div class="gr"></div></div>
<div class="t" style="left:19px;top:465px;color:#000;transform:scaleX(0.9606);transform-origin:0 0;">Print Spooler</div>
<div class="t" style="left:224px;top:465px;color:#000;transform:scaleX(0.9820);transform-origin:0 0;">Manages all l<span style="letter-spacing:0.9px">...</span></div>
<div class="t" style="left:314px;top:465px;color:#000;transform:scaleX(0.9547);transform-origin:0 0;">Started</div>
<div class="t" style="left:376px;top:465px;color:#000;transform:scaleX(0.9606);transform-origin:0 0;">Automatic</div>
<div class="t" style="left:464px;top:465px;color:#000;transform:scaleX(0.9628);transform-origin:0 0;">Local System</div>
<div class="a" style="left:2px;top:479px"><div class="gr"></div></div>
<div class="t" style="left:19px;top:482px;color:#000;transform:scaleX(0.9652);transform-origin:0 0;">Protected Storage</div>
<div class="t" style="left:224px;top:482px;color:#000;transform:scaleX(0.9854);transform-origin:0 0;">Protects stor<span style="letter-spacing:0.9px">...</span></div>
<div class="t" style="left:314px;top:482px;color:#000;transform:scaleX(0.9547);transform-origin:0 0;">Started</div>
<div class="t" style="left:376px;top:482px;color:#000;transform:scaleX(0.9606);transform-origin:0 0;">Automatic</div>
<div class="t" style="left:464px;top:482px;color:#000;transform:scaleX(0.9628);transform-origin:0 0;">Local System</div>
<div class="a" style="left:2px;top:496px"><div class="gr"></div></div>
<div class="t" style="left:19px;top:499px;color:#000;transform:scaleX(0.9813);transform-origin:0 0;">Remote Access Auto Connection Mana<span style="letter-spacing:0.9px">...</span></div>
<div class="t" style="left:224px;top:499px;color:#000;transform:scaleX(0.9764);transform-origin:0 0;">Detects unsu<span style="letter-spacing:0.9px">...</span></div>
<div class="t" style="left:376px;top:499px;color:#000;transform:scaleX(0.9496);transform-origin:0 0;">Manual</div>
<div class="t" style="left:464px;top:499px;color:#000;transform:scaleX(0.9628);transform-origin:0 0;">Local System</div>
<div class="a" style="left:2px;top:513px"><div class="gr"></div></div>
<div class="t" style="left:19px;top:516px;color:#000;transform:scaleX(0.9696);transform-origin:0 0;">Remote Access Connection Manager</div>
<div class="t" style="left:224px;top:516px;color:#000;transform:scaleX(0.9830);transform-origin:0 0;">Manages dial-<span style="letter-spacing:0.9px">...</span></div>
<div class="t" style="left:376px;top:516px;color:#000;transform:scaleX(0.9496);transform-origin:0 0;">Manual</div>
<div class="t" style="left:464px;top:516px;color:#000;transform:scaleX(0.9628);transform-origin:0 0;">Local System</div>
<div class="a" style="left:2px;top:530px"><div class="gr"></div></div>
<div class="t" style="left:19px;top:533px;color:#000;transform:scaleX(0.9656);transform-origin:0 0;">Remote Desktop Help Session Manager</div>
<div class="t" style="left:224px;top:533px;color:#000;transform:scaleX(0.9747);transform-origin:0 0;">Manages and<span style="letter-spacing:0.9px">...</span></div>
<div class="t" style="left:376px;top:533px;color:#000;transform:scaleX(0.9496);transform-origin:0 0;">Manual</div>
<div class="t" style="left:464px;top:533px;color:#000;transform:scaleX(0.9628);transform-origin:0 0;">Local System</div>
<div class="a" style="left:2px;top:547px"><div class="gr"></div></div>
<div class="t" style="left:19px;top:550px;color:#000;transform:scaleX(0.9625);transform-origin:0 0;">Remote Procedure Call (RPC)</div>
<div class="t" style="left:224px;top:550px;color:#000;transform:scaleX(0.9839);transform-origin:0 0;">Serves as the<span style="letter-spacing:0.9px">...</span></div>
<div class="t" style="left:314px;top:550px;color:#000;transform:scaleX(0.9547);transform-origin:0 0;">Started</div>
<div class="t" style="left:376px;top:550px;color:#000;transform:scaleX(0.9606);transform-origin:0 0;">Automatic</div>
<div class="t" style="left:464px;top:550px;color:#000;transform:scaleX(0.9628);transform-origin:0 0;">Local System</div>
<div class="a" style="left:2px;top:564px"><div class="gr"></div></div>
<div class="t" style="left:19px;top:567px;color:#000;transform:scaleX(0.9649);transform-origin:0 0;">Remote Procedure Call (RPC) Locator</div>
<div class="t" style="left:224px;top:567px;color:#000;transform:scaleX(0.9774);transform-origin:0 0;">Enables remo<span style="letter-spacing:0.9px">...</span></div>
<div class="t" style="left:376px;top:567px;color:#000;transform:scaleX(0.9496);transform-origin:0 0;">Manual</div>
<div class="t" style="left:464px;top:567px;color:#000;transform:scaleX(1.0048);transform-origin:0 0;">Network S<span style="letter-spacing:0.9px">...</span></div>
<div class="a" style="left:2px;top:581px"><div class="gr"></div></div>
<div class="t" style="left:19px;top:584px;color:#000;transform:scaleX(0.9625);transform-origin:0 0;">Remote Registry</div>
<div class="t" style="left:224px;top:584px;color:#000;transform:scaleX(0.9774);transform-origin:0 0;">Enables remo<span style="letter-spacing:0.9px">...</span></div>
<div class="t" style="left:314px;top:584px;color:#000;transform:scaleX(0.9547);transform-origin:0 0;">Started</div>
<div class="t" style="left:376px;top:584px;color:#000;transform:scaleX(0.9606);transform-origin:0 0;">Automatic</div>
<div class="t" style="left:464px;top:584px;color:#000;transform:scaleX(0.9628);transform-origin:0 0;">Local Service</div>
<div class="a" style="left:2px;top:598px"><div class="gr"></div></div>
<div class="t" style="left:19px;top:601px;color:#000;transform:scaleX(0.9654);transform-origin:0 0;">Removable Storage</div>
<div class="t" style="left:224px;top:601px;color:#000;transform:scaleX(0.9747);transform-origin:0 0;">Manages and<span style="letter-spacing:0.9px">...</span></div>
<div class="t" style="left:376px;top:601px;color:#000;transform:scaleX(0.9496);transform-origin:0 0;">Manual</div>
<div class="t" style="left:464px;top:601px;color:#000;transform:scaleX(0.9628);transform-origin:0 0;">Local System</div>
</div>
<div class="a" style="left:127px;top:73px;width:219px;height:16px;background:#d4d0c8"></div><div class="a" style="left:127px;top:73px;width:219px;height:1px;background:#fff"></div><div class="a" style="left:127px;top:73px;width:1px;height:16px;background:#fff"></div><div class="a" style="left:128px;top:87px;width:217px;height:1px;background:#808080"></div><div class="a" style="left:344px;top:74px;width:1px;height:14px;background:#808080"></div><div class="a" style="left:127px;top:88px;width:219px;height:1px;background:#404040"></div><div class="a" style="left:345px;top:73px;width:1px;height:16px;background:#404040"></div>
<div class="t" style="left:132px;top:76px;color:#000;transform:scaleX(0.9475);transform-origin:0 0;">Name</div>
<div class="a" style="left:346px;top:73px;width:90px;height:16px;background:#d4d0c8"></div><div class="a" style="left:346px;top:73px;width:90px;height:1px;background:#fff"></div><div class="a" style="left:346px;top:73px;width:1px;height:16px;background:#fff"></div><div class="a" style="left:347px;top:87px;width:88px;height:1px;background:#808080"></div><div class="a" style="left:434px;top:74px;width:1px;height:14px;background:#808080"></div><div class="a" style="left:346px;top:88px;width:90px;height:1px;background:#404040"></div><div class="a" style="left:435px;top:73px;width:1px;height:16px;background:#404040"></div>
<div class="t" style="left:351px;top:76px;color:#000;transform:scaleX(0.9614);transform-origin:0 0;">Description</div>
<div class="a" style="left:436px;top:73px;width:62px;height:16px;background:#d4d0c8"></div><div class="a" style="left:436px;top:73px;width:62px;height:1px;background:#fff"></div><div class="a" style="left:436px;top:73px;width:1px;height:16px;background:#fff"></div><div class="a" style="left:437px;top:87px;width:60px;height:1px;background:#808080"></div><div class="a" style="left:496px;top:74px;width:1px;height:14px;background:#808080"></div><div class="a" style="left:436px;top:88px;width:62px;height:1px;background:#404040"></div><div class="a" style="left:497px;top:73px;width:1px;height:16px;background:#404040"></div>
<div class="t" style="left:441px;top:76px;color:#000;transform:scaleX(0.9513);transform-origin:0 0;">Status</div>
<div class="a" style="left:498px;top:73px;width:88px;height:16px;background:#d4d0c8"></div><div class="a" style="left:498px;top:73px;width:88px;height:1px;background:#fff"></div><div class="a" style="left:498px;top:73px;width:1px;height:16px;background:#fff"></div><div class="a" style="left:499px;top:87px;width:86px;height:1px;background:#808080"></div><div class="a" style="left:584px;top:74px;width:1px;height:14px;background:#808080"></div><div class="a" style="left:498px;top:88px;width:88px;height:1px;background:#404040"></div><div class="a" style="left:585px;top:73px;width:1px;height:16px;background:#404040"></div>
<div class="t" style="left:503px;top:76px;color:#000;transform:scaleX(0.9739);transform-origin:0 0;">Startup Type</div>
<div class="a" style="left:586px;top:73px;width:74px;height:16px;background:#d4d0c8"></div><div class="a" style="left:586px;top:73px;width:74px;height:1px;background:#fff"></div><div class="a" style="left:586px;top:73px;width:1px;height:16px;background:#fff"></div><div class="a" style="left:587px;top:87px;width:72px;height:1px;background:#808080"></div><div class="a" style="left:658px;top:74px;width:1px;height:14px;background:#808080"></div><div class="a" style="left:586px;top:88px;width:74px;height:1px;background:#404040"></div><div class="a" style="left:659px;top:73px;width:1px;height:16px;background:#404040"></div>
<div class="t" style="left:591px;top:76px;color:#000;transform:scaleX(0.9625);transform-origin:0 0;">Log On As</div>
<div class="a" style="left:660px;top:73px;width:346px;height:16px;background:#d4d0c8"></div><div class="a" style="left:660px;top:73px;width:346px;height:1px;background:#fff"></div><div class="a" style="left:660px;top:73px;width:1px;height:16px;background:#fff"></div><div class="a" style="left:661px;top:87px;width:344px;height:1px;background:#808080"></div><div class="a" style="left:1004px;top:74px;width:1px;height:14px;background:#808080"></div><div class="a" style="left:660px;top:88px;width:346px;height:1px;background:#404040"></div><div class="a" style="left:1005px;top:73px;width:1px;height:16px;background:#404040"></div>
<svg class="a" style="left:170px;top:76px" width="12" height="10"><path d="M2.5 8.5L5.5 2.5" stroke="#808080" fill="none"/><path d="M5.5 2.5L9.5 8.5H2" stroke="#fff" fill="none"/></svg>
<div class="a chk" style="left:1006px;top:89px;width:16px;height:596px"></div>
<div class="a" style="left:1006px;top:73px;width:16px;height:16px;background:#d4d0c8"></div><div class="a" style="left:1006px;top:73px;width:16px;height:1px;background:#d4d0c8"></div><div class="a" style="left:1006px;top:73px;width:1px;height:16px;background:#d4d0c8"></div><div class="a" style="left:1007px;top:74px;width:14px;height:1px;background:#fff"></div><div class="a" style="left:1007px;top:74px;width:1px;height:14px;background:#fff"></div><div class="a" style="left:1007px;top:87px;width:14px;height:1px;background:#808080"></div><div class="a" style="left:1020px;top:74px;width:1px;height:14px;background:#808080"></div><div class="a" style="left:1006px;top:88px;width:16px;height:1px;background:#404040"></div><div class="a" style="left:1021px;top:73px;width:1px;height:16px;background:#404040"></div>
<svg class="a" style="left:1006px;top:73px" width="16" height="16"><path d="M4 10h7L7.5 6.5z" fill="#000"/></svg>
<div class="a" style="left:1006px;top:685px;width:16px;height:16px;background:#d4d0c8"></div><div class="a" style="left:1006px;top:685px;width:16px;height:1px;background:#d4d0c8"></div><div class="a" style="left:1006px;top:685px;width:1px;height:16px;background:#d4d0c8"></div><div class="a" style="left:1007px;top:686px;width:14px;height:1px;background:#fff"></div><div class="a" style="left:1007px;top:686px;width:1px;height:14px;background:#fff"></div><div class="a" style="left:1007px;top:699px;width:14px;height:1px;background:#808080"></div><div class="a" style="left:1020px;top:686px;width:1px;height:14px;background:#808080"></div><div class="a" style="left:1006px;top:700px;width:16px;height:1px;background:#404040"></div><div class="a" style="left:1021px;top:685px;width:1px;height:16px;background:#404040"></div>
<svg class="a" style="left:1006px;top:685px" width="16" height="16"><path d="M4 6h7L7.5 9.5z" fill="#000"/></svg>
<div class="a" style="left:1006px;top:230px;width:16px;height:234px;background:#d4d0c8"></div><div class="a" style="left:1006px;top:230px;width:16px;height:1px;background:#d4d0c8"></div><div class="a" style="left:1006px;top:230px;width:1px;height:234px;background:#d4d0c8"></div><div class="a" style="left:1007px;top:231px;width:14px;height:1px;background:#fff"></div><div class="a" style="left:1007px;top:231px;width:1px;height:232px;background:#fff"></div><div class="a" style="left:1007px;top:462px;width:14px;height:1px;background:#808080"></div><div class="a" style="left:1020px;top:231px;width:1px;height:232px;background:#808080"></div><div class="a" style="left:1006px;top:463px;width:16px;height:1px;background:#404040"></div><div class="a" style="left:1021px;top:230px;width:1px;height:234px;background:#404040"></div>
<div class="a" style="left:125px;top:703px;width:899px;height:1px;background:#000"></div>
<svg class="a" style="left:125px;top:703px" width="140" height="18"><path d="M0.5 0.5L7.5 16.5H63.5L68 6" fill="#d4d0c8" stroke="#000"/><path d="M0 0.5H70" stroke="#000"/><path d="M66 0.5L72.5 16.5H128.5L135.5 0.5" fill="#fff" stroke="#000"/></svg>
<div class="t" style="left:137px;top:706px;color:#000;transform:scaleX(0.9598);transform-origin:0 0;">Extended</div>
<div class="t" style="left:203px;top:706px;color:#000;transform:scaleX(0.9591);transform-origin:0 0;">Standard</div>
<div class="a" style="left:0px;top:722px;width:803px;height:1px;background:#808080"></div><div class="a" style="left:0px;top:722px;width:1px;height:17px;background:#808080"></div><div class="a" style="left:0px;top:739px;width:804px;height:1px;background:#fff"></div><div class="a" style="left:803px;top:722px;width:1px;height:18px;background:#fff"></div>
<div class="a" style="left:806px;top:722px;width:130px;height:1px;background:#808080"></div><div class="a" style="left:806px;top:722px;width:1px;height:17px;background:#808080"></div><div class="a" style="left:806px;top:739px;width:131px;height:1px;background:#fff"></div><div class="a" style="left:936px;top:722px;width:1px;height:18px;background:#fff"></div>
<div class="a" style="left:939px;top:722px;width:82px;height:1px;background:#808080"></div><div class="a" style="left:939px;top:722px;width:1px;height:17px;background:#808080"></div><div class="a" style="left:939px;top:739px;width:83px;height:1px;background:#fff"></div><div class="a" style="left:1021px;top:722px;width:1px;height:18px;background:#fff"></div>
<div class="a" style="left:0px;top:741px;width:1024px;height:1px;background:#fff"></div>
</body></html>
